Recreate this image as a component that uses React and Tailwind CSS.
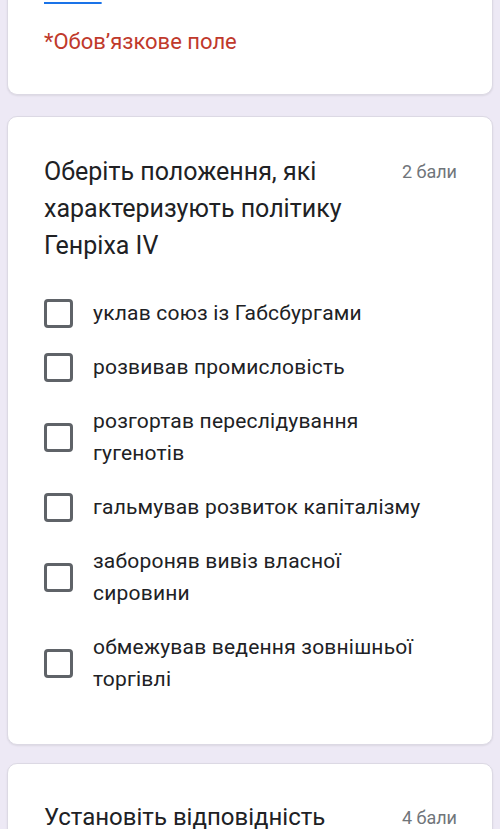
const OPTIONS = [
  'уклав союз із Габсбургами',
  'розвивав промисловість',
  'розгортав переслідування гугенотів',
  'гальмував розвиток капіталізму',
  'забороняв вивіз власної сировини',
  'обмежував ведення зовнішньої торгівлі',
]

function Card({ children, className = '' }) {
  return (
    <div className={`mx-[7px] rounded-[10px] bg-white border border-[#dcd9e4] shadow-[0_1px_2px_rgba(0,0,0,0.08)] ${className}`}>
      {children}
    </div>
  )
}

function Option({ label }) {
  return (
    <div className="flex items-center py-[11px]">
      <div className="w-[29px] h-[29px] shrink-0 rounded-[4px] border-[3px] border-[#5f6368]" />
      <span className="ml-[20px] text-[21px] leading-[32px] text-[#202124] tracking-[0.2px]">{label}</span>
    </div>
  )
}

export default function App() {
  return (
    <div className="w-[500px] h-[829px] overflow-hidden bg-[#ede9f5]" style={{ fontFamily: 'Roboto, "Noto Sans", sans-serif' }}>
      <Card className="-mt-[19px] rounded-t-none border-t-0 pb-[38px] pl-[36px]">
        <a className="block w-fit text-[21px] leading-[24px] text-[#1a73e8] underline underline-offset-2">Сайте</a>
        <p className="mt-[23px] text-[22px] leading-[28px] text-[#c0392b]">*Обов’язкове поле</p>
      </Card>

      <Card className="mt-[21px] pl-[36px] pr-[54px] pt-[36px] pb-[38px]">
        <div className="flex items-start justify-between">
          <h2 className="w-[310px] text-[25px] leading-[37px] text-[#202124]">
            Оберіть положення, які характеризують політику Генріха IV
          </h2>
          <span className="-mr-[19px] mt-[5px] text-[18px] leading-[28px] text-[#70757a]">2 бали</span>
        </div>
        <div className="mt-[22px]">
          {OPTIONS.map(o => <Option key={o} label={o} />)}
        </div>
      </Card>

      <Card className="mt-[18px] pl-[36px] pt-[35px] pb-[40px]">
        <div className="flex items-start justify-between pr-[35px]">
          <h2 className="text-[24px] leading-[37px] text-[#202124]">Установіть відповідність</h2>
          <span className="mt-[5px] text-[18px] leading-[28px] text-[#70757a]">4 бали</span>
        </div>
      </Card>
    </div>
  )
}
